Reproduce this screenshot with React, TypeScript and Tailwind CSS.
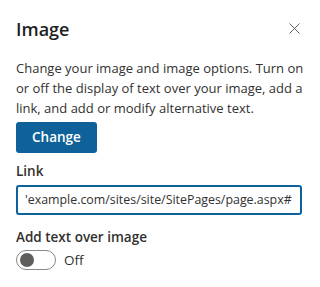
import React, { useState } from "react";

// Property pane: Image web part settings
export default function App() {
  const [textOver, setTextOver] = useState(false);

  return (
    <div
      className="w-[320px] h-[287px] bg-white text-[#323130] overflow-hidden"
      style={{ fontFamily: '"Open Sans", "Noto Sans", sans-serif' }}
    >
      <div className="pl-4 pr-[10px] pt-[14px]">
        {/* Header */}
        <div className="flex items-center justify-between">
          <h1 className="text-[18px] leading-[28px] font-semibold text-[#201f1e]">Image</h1>
          <button className="w-8 h-8 -mt-[2px] flex items-center justify-center text-[#605e5c]" aria-label="Close">
            <svg width="11" height="11" viewBox="0 0 11 11" fill="none" stroke="currentColor" strokeWidth="1">
              <path d="M0.5 0.5 L10.5 10.5 M10.5 0.5 L0.5 10.5" />
            </svg>
          </button>
        </div>

        <p className="mt-[14px] pr-[4px] text-[13px] leading-[20px]">
          Change your image and image options. Turn on or off the display of text over your image, add a link, and add or
          modify alternative text.
        </p>

        <button className="mt-1 h-[31px] px-4 rounded-[3px] bg-[#0f6299] text-white text-[13.5px] font-semibold">
          Change
        </button>

        {/* Link field */}
        <label className="block mt-2 text-[13.5px] leading-[20px] font-semibold">Link</label>
        <div className="mt-1 mr-[8px] h-[30px] border-2 border-[#0f6299] rounded-[3px] flex items-center px-[7px] overflow-hidden">
          <span className="text-[12.4px] whitespace-nowrap">'example.com/sites/site/SitePages/page.aspx#</span>
        </div>

        {/* Toggle */}
        <div className="mt-[12px] text-[13.5px] leading-[20px] font-semibold">Add text over image</div>
        <div className="mt-[3px] flex items-center gap-2">
          <button
            onClick={() => setTextOver(!textOver)}
            className="w-10 h-5 rounded-full border border-[#8a8886] bg-white flex items-center px-[3px]"
          >
            <span className="w-[14px] h-[14px] rounded-full bg-[#605e5c]" />
          </button>
          <span className="text-[13.5px]">{textOver ? "On" : "Off"}</span>
        </div>
      </div>
    </div>
  );
}
